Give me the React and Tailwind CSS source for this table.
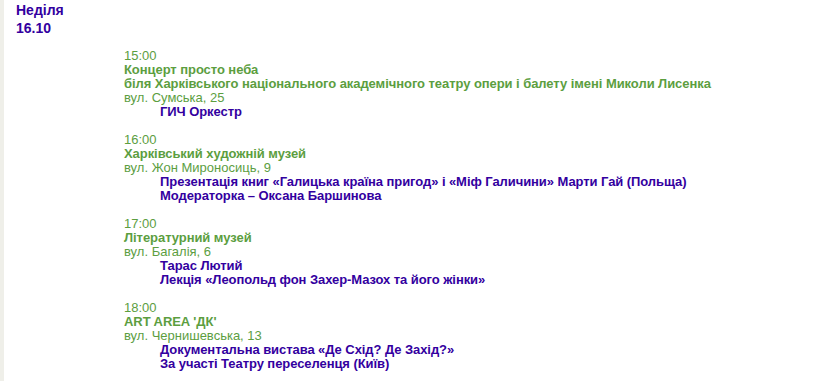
import React from "react";

const events = [
  {
    time: "15:00",
    place: ["Концерт просто неба", "біля Харківського національного академічного театру опери і балету імені Миколи Лисенка"],
    address: "вул. Сумська, 25",
    items: ["ГИЧ Оркестр"],
  },
  {
    time: "16:00",
    place: ["Харківський художній музей"],
    address: "вул. Жон Мироносиць, 9",
    items: [
      "Презентація книг «Галицька країна пригод» і «Міф Галичини» Марти Гай (Польща)",
      "Модераторка – Оксана Баршинова",
    ],
  },
  {
    time: "17:00",
    place: ["Літературний музей"],
    address: "вул. Багалія, 6",
    items: ["Тарас Лютий", "Лекція «Леопольд фон Захер-Мазох та його жінки»"],
  },
  {
    time: "18:00",
    place: ["ART AREA 'ДК'"],
    address: "вул. Чернишевська, 13",
    items: ["Документальна вистава «Де Схід? Де Захід?»", "За участі Театру переселенця (Київ)"],
  },
];

export default function App() {
  return (
    <div
      className="flex min-h-[381px] bg-white"
      style={{ fontFamily: '"Liberation Sans", Arial, sans-serif' }}
    >
      <div className="w-[4px] shrink-0 bg-[#efefe9]" />
      <div className="flex-1 pl-[12px]">
        <div className="pt-[1px] text-[14px] font-bold leading-[18px] text-[#3300a0]">
          <div>Неділя</div>
          <div>16.10</div>
        </div>
        <div className="ml-[108px] mt-[12px] text-[13px] leading-[14px]">
          {events.map((e) => (
            <div key={e.time} className="mb-[14px]">
              <div className="text-[#5c9e3f]">{e.time}</div>
              {e.place.map((p) => (
                <div key={p} className="font-bold tracking-[-0.06px] text-[#5c9e3f]">
                  {p}
                </div>
              ))}
              <div className="text-[#5c9e3f]">{e.address}</div>
              {e.items.map((it) => (
                <div key={it} className="pl-[36px] font-bold tracking-[-0.07px] text-[#3300a0]">
                  {it}
                </div>
              ))}
            </div>
          ))}
        </div>
      </div>
    </div>
  );
}
